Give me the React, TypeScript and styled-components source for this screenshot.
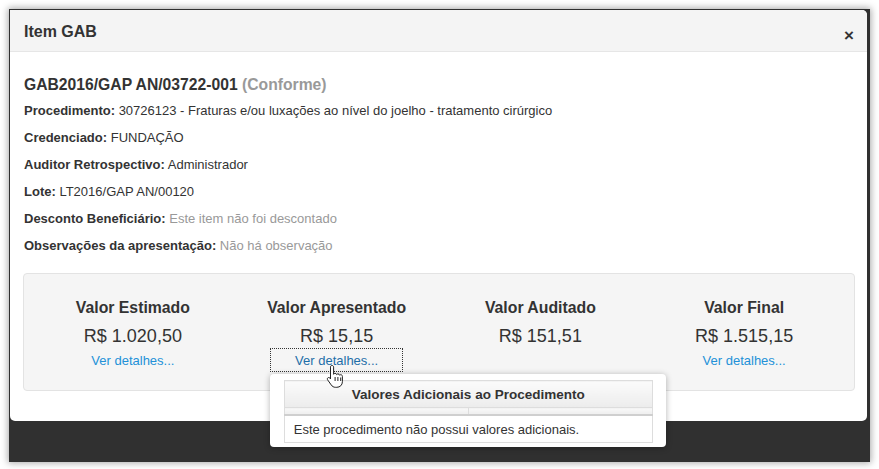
import React from "react";
import styled, { createGlobalStyle } from "styled-components";

const Global = createGlobalStyle`
  html, body { margin: 0; padding: 0; background: #ffffff; }
  body { font-family: "Liberation Sans", Arial, sans-serif; color: #333; }
`;

const Page = styled.div`
  width: 879px;
  height: 469px;
  padding: 9px 0 0 9px;
  box-sizing: border-box;
`;

const Backdrop = styled.div`
  width: 861px;
  height: 453px;
  background: #303030;
  box-shadow: 0 0 7px 1px rgba(0, 0, 0, 0.35);
  padding: 1px 3px 0 1px;
  box-sizing: border-box;
`;

const Modal = styled.div`
  position: relative;
  background: #fff;
  border-radius: 0 5px 5px 5px;
  height: 411px;
  display: flex;
  flex-direction: column;
`;

const Header = styled.div`
  height: 42px;
  box-sizing: border-box;
  background: #f4f4f4;
  border-bottom: 1px solid #e6e6e6;
  border-radius: 0 5px 0 0;
  display: flex;
  align-items: center;
  justify-content: space-between;
  padding: 0 13px 0 14px;
`;

const Title = styled.h4`
  margin: 0;
  font-size: 16px;
  font-weight: bold;
  color: #333;
  padding-top: 3px;
`;

const Close = styled.span`
  font-size: 17px;
  font-weight: bold;
  color: #333;
  line-height: 1;
  padding-top: 9px;
`;

const Body = styled.div`
  padding: 22px 12px 0 13px;
`;

const Heading = styled.h3`
  margin: 0 0 6px 1px;
  font-size: 15.7px;
  font-weight: bold;
  line-height: 22px;
  color: #333;
`;

const Status = styled.span`
  color: #999;
`;

const Line = styled.p`
  margin: 0 0 9px 1px;
  font-size: 13px;
  line-height: 18px;
  color: #333;
`;

const Label = styled.b`
  font-weight: bold;
`;

const Muted = styled.span`
  color: #999;
`;

const Well = styled.div`
  margin-top: 18px;
  background: #f5f5f5;
  border: 1px solid #e3e3e3;
  border-radius: 4px;
  height: 118px;
  box-sizing: border-box;
  padding: 24px 8px 0 7px;
  display: grid;
  grid-template-columns: repeat(4, 1fr);
`;

const Col = styled.div`
  position: relative;
  display: flex;
  flex-direction: column;
  align-items: center;
`;

const ColTitle = styled.div`
  font-size: 15.8px;
  font-weight: bold;
  line-height: 20px;
  color: #333;
`;

const Value = styled.div`
  margin-top: 8px;
  font-size: 18px;
  line-height: 20px;
  color: #333;
`;

const Link = styled.a<{ $focused?: boolean }>`
  margin-top: 3px;
  display: inline-block;
  font-size: 13px;
  line-height: 15px;
  padding: 4px 24px 3px 24px;
  color: ${(p) => (p.$focused ? "#1e6ea8" : "#2391d8")};
  text-decoration: none;
  outline: ${(p) => (p.$focused ? "1px dotted #333" : "none")};
  outline-offset: 0;
`;

const Popover = styled.div`
  position: absolute;
  left: 35px;
  top: 76px;
  width: 396px;
  height: 73px;
  box-sizing: border-box;
  background: #fff;
  border-radius: 4px;
  box-shadow: 0 1px 6px rgba(0, 0, 0, 0.3);
  padding: 6px 13px 0 14px;
  z-index: 2;
`;

const Table = styled.table`
  width: 100%;
  border-collapse: collapse;
  font-size: 13px;
  color: #333;
`;

const HeadCell = styled.th`
  height: 26px;
  padding: 0;
  border: 1px solid #ddd;
  background: linear-gradient(#fbfbfb, #ececec);
  font-weight: bold;
  font-size: 13.5px;
  text-align: center;
`;

const ThinCell = styled.td`
  height: 6px;
  padding: 0;
  border: 1px solid #ddd;
  border-bottom: 2px solid #cfcfcf;
  background: linear-gradient(#f8f8f8, #eeeeee);
`;

const BodyCell = styled.td`
  height: 26px;
  padding: 0 9px;
  border: 1px solid #ddd;
`;

const Cursor = styled.svg`
  position: absolute;
  left: 91px;
  top: 66px;
  z-index: 3;
`;

function HandCursor() {
  return (
    <Cursor width="20" height="24" viewBox="0 0 20 24">
      <path
        d="M6 1.5c1 0 1.6.7 1.6 1.6v7.2c.3-.6.9-.9 1.5-.9.8 0 1.4.5 1.5 1.2.3-.4.8-.7 1.4-.7.8 0 1.4.5 1.6 1.3.3-.3.7-.5 1.2-.5.9 0 1.6.7 1.6 1.7v5.3c0 3.3-2.4 5.6-5.6 5.6H9.6c-2 0-3.3-.8-4.4-2.4L1.6 15.8c-.5-.8-.3-1.7.4-2.1.7-.4 1.5-.2 2 .5l.5.8V3.1C4.4 2.2 5 1.5 6 1.5z"
        fill="#fff"
        stroke="#222"
        strokeWidth="1"
        strokeLinejoin="round"
      />
      <path d="M9.1 13v4M11.9 13v4M14.7 13.5v3.5" stroke="#222" strokeWidth="1" />
    </Cursor>
  );
}

type Item = { title: string; value: string; link: boolean; focused?: boolean };

const items: Item[] = [
  { title: "Valor Estimado", value: "R$ 1.020,50", link: true },
  { title: "Valor Apresentado", value: "R$ 15,15", link: true, focused: true },
  { title: "Valor Auditado", value: "R$ 151,51", link: false },
  { title: "Valor Final", value: "R$ 1.515,15", link: true },
];

export default function App() {
  return (
    <>
      <Global />
      <Page>
        <Backdrop>
          <Modal>
            <Header>
              <Title>Item GAB</Title>
              <Close>×</Close>
            </Header>
            <Body>
              <Heading>
                GAB2016/GAP AN/03722-001 <Status>(Conforme)</Status>
              </Heading>
              <Line>
                <Label>Procedimento:</Label> 30726123 - Fraturas e/ou luxações ao nível do joelho - tratamento cirúrgico
              </Line>
              <Line>
                <Label>Credenciado:</Label> FUNDAÇÃO
              </Line>
              <Line>
                <Label>Auditor Retrospectivo:</Label> Administrador
              </Line>
              <Line>
                <Label>Lote:</Label> LT2016/GAP AN/00120
              </Line>
              <Line>
                <Label>Desconto Beneficiário:</Label> <Muted>Este item não foi descontado</Muted>
              </Line>
              <Line>
                <Label>Observações da apresentação:</Label> <Muted>Não há observação</Muted>
              </Line>
              <Well>
                {items.map((it) => (
                  <Col key={it.title}>
                    <ColTitle>{it.title}</ColTitle>
                    <Value>{it.value}</Value>
                    {it.link && (
                      <Link href="#" $focused={it.focused}>
                        Ver detalhes...
                      </Link>
                    )}
                    {it.focused && (
                      <>
                        <HandCursor />
                        <Popover>
                          <Table>
                            <thead>
                              <tr>
                                <HeadCell colSpan={2}>Valores Adicionais ao Procedimento</HeadCell>
                              </tr>
                            </thead>
                            <tbody>
                              <tr>
                                <ThinCell />
                                <ThinCell />
                              </tr>
                              <tr>
                                <BodyCell colSpan={2}>Este procedimento não possui valores adicionais.</BodyCell>
                              </tr>
                            </tbody>
                          </Table>
                        </Popover>
                      </>
                    )}
                  </Col>
                ))}
              </Well>
            </Body>
          </Modal>
        </Backdrop>
      </Page>
    </>
  );
}
